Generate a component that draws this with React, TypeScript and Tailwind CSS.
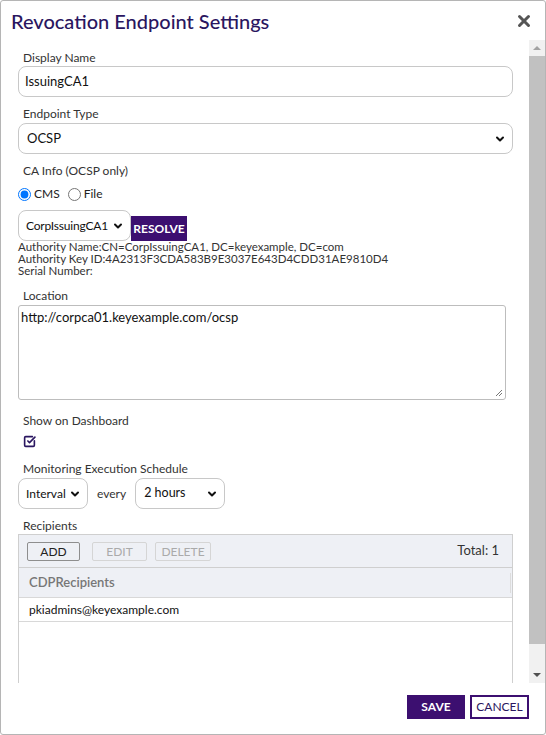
import React from 'react';
import { ChevronDown, SquareCheckBig, X } from 'lucide-react';

const font = { fontFamily: 'Lato, "Liberation Sans", sans-serif' };

const Label: React.FC<{ text: string; className?: string }> = ({ text, className }) => (
  <div className={`pl-[5px] text-[12px] leading-[16px] text-[#333] ${className ?? ''}`}>{text}</div>
);

const Select: React.FC<{ value: string; className: string; textClass?: string }> = ({
  value,
  className,
  textClass,
}) => (
  <div
    className={`flex shrink-0 items-center justify-between whitespace-nowrap rounded-[8px] border border-[#c8c8c8] bg-white ${className}`}
  >
    <span className={`text-[#111] ${textClass ?? 'pl-[8px] text-[13px]'}`}>{value}</span>
    <ChevronDown className="mr-[6px] h-[12px] w-[12px] shrink-0 text-[#111]" strokeWidth={4} />
  </div>
);

const Scrollbar: React.FC = () => (
  <div className="flex w-[16px] flex-col items-center bg-[#f1f1f1]">
    <div className="flex h-[16px] items-center justify-center">
      <div className="h-0 w-0 border-x-[4px] border-b-[4px] border-x-transparent border-b-[#a3a3a3]" />
    </div>
    <div className="h-[588px] w-[16px] bg-[#c1c1c1]" />
    <div className="flex flex-1 items-end justify-center pb-[6px]">
      <div className="h-0 w-0 border-x-[4px] border-t-[4px] border-x-transparent border-t-[#505050]" />
    </div>
  </div>
);

const RecipientsGrid: React.FC = () => (
  <div className="h-[220px] border border-[#cfcfcf]">
    <div className="flex h-[32px] items-center bg-[#eef0f5] pl-[8px] pr-[13px]">
      <button className="h-[19px] w-[53px] rounded-[2px] border border-[#8e8e8e] text-[12px] text-[#222]">
        ADD
      </button>
      <button className="ml-[12px] h-[19px] w-[55px] rounded-[2px] border border-[#d5d5d5] text-[12px] text-[#aaa]">
        EDIT
      </button>
      <button className="ml-[8px] h-[19px] w-[56px] rounded-[2px] border border-[#d5d5d5] text-[12px] text-[#aaa]">
        DELETE
      </button>
      <span className="ml-auto text-[13px] text-[#333]">Total: 1</span>
    </div>
    <div className="flex h-[30px] items-center border-t border-[#cfcfcf] bg-[#eef0f5] pl-[10px]">
      <span className="flex-1 text-[13px] font-semibold text-[#777]">CDPRecipients</span>
      <div className="mr-[1px] h-[20px] w-[1px] bg-[#dcdcdc]" />
    </div>
    <div className="flex h-[25px] items-center border-y border-[#d8d8d8] pl-[10px] text-[12px] text-[#111]">
      pkiadmins@keyexample.com
    </div>
  </div>
);

export default function App() {
  return (
    <div
      style={font}
      className="flex h-[735px] w-[546px] flex-col overflow-hidden rounded-[3px] border border-[#b5b5b5] bg-white"
    >
      <div className="flex h-[39px] items-center justify-between pl-[10px] pr-[12px]">
        <h1 className="text-[20px] font-medium leading-[24px] text-[#2a1660]">
          Revocation Endpoint Settings
        </h1>
        <X className="h-[18px] w-[18px] text-[#555]" strokeWidth={4} />
      </div>

      <div className="flex h-[643px]">
        <div className="flex-1 overflow-hidden pl-[17px] pr-[16px] pt-[10px]">
          <Label text="Display Name" />
          <div className="flex h-[31px] items-center rounded-[8px] border border-[#c8c8c8] pl-[6px] text-[13px] text-[#111]">
            IssuingCA1
          </div>

          <Label text="Endpoint Type" className="mt-[9px]" />
          <Select value="OCSP" className="mt-[1px] h-[31px] w-full" />

          <Label text="CA Info (OCSP only)" className="mt-[9px]" />
          <div className="mt-[7px] flex h-[16px] items-center text-[12px] text-[#222]">
            <input type="radio" name="ca" defaultChecked className="m-0 h-[13px] w-[13px]" />
            <span className="ml-[3px]">CMS</span>
            <input type="radio" name="ca" className="m-0 ml-[8px] h-[13px] w-[13px]" />
            <span className="ml-[3px]">File</span>
          </div>

          <div className="mt-[8px] flex items-end">
            <Select
              value="CorpIssuingCA1"
              className="h-[31px] w-[113px]"
              textClass="pl-[7px] text-[12px] tracking-[-0.2px]"
            />
            <button className="h-[25px] w-[56px] shrink-0 bg-[#3c0f70] text-[12px] font-bold text-white">
              RESOLVE
            </button>
          </div>
          <div className="text-[11.5px] leading-[12px] text-[#333]">
            <div>Authority Name:CN=CorpIssuingCA1, DC=keyexample, DC=com</div>
            <div>Authority Key ID:4A2313F3CDA583B9E3037E643D4CDD31AE9810D4</div>
            <div>Serial Number:</div>
          </div>

          <Label text="Location" className="mt-[11px]" />
          <div className="relative mt-[1px] h-[95px] w-[488px] rounded-[3px] border border-[#bdbdbd] px-[2px] pt-[2px] text-[13px] text-[#111]">
            http://corpca01.keyexample.com/ocsp
            <svg className="absolute bottom-[2px] right-[2px]" width="8" height="8" viewBox="0 0 8 8">
              <path d="M7 1 L1 7 M7 4 L4 7" stroke="#777" strokeWidth="1" />
            </svg>
          </div>

          <Label text="Show on Dashboard" className="mt-[13px]" />
          <div className="mt-[6px] pl-[5px]">
            <SquareCheckBig className="h-[13px] w-[13px] text-[#2a1660]" strokeWidth={3} />
          </div>

          <Label text="Monitoring Execution Schedule" className="mt-[13px]" />
          <div className="mt-[1px] flex items-center">
            <Select value="Interval" className="h-[31px] w-[70px]" textClass="pl-[7px] text-[12px]" />
            <span className="ml-[9px] text-[12px] text-[#333]">every</span>
            <Select value="2 hours" className="ml-[9px] h-[31px] w-[90px]" textClass="pl-[8px] text-[12.5px]" />
          </div>

          <Label text="Recipients" className="mt-[9px]" />
          <RecipientsGrid />
        </div>
        <Scrollbar />
      </div>

      <div className="flex flex-1 items-start justify-end gap-[5px] pr-[16px] pt-[12px]">
        <button className="h-[24px] w-[58px] bg-[#3c0f70] text-[12px] font-bold text-white">
          SAVE
        </button>
        <button className="h-[24px] w-[59px] border-2 border-[#3c0f70] bg-white text-[12px] text-[#2a1660]">
          CANCEL
        </button>
      </div>
    </div>
  );
}
